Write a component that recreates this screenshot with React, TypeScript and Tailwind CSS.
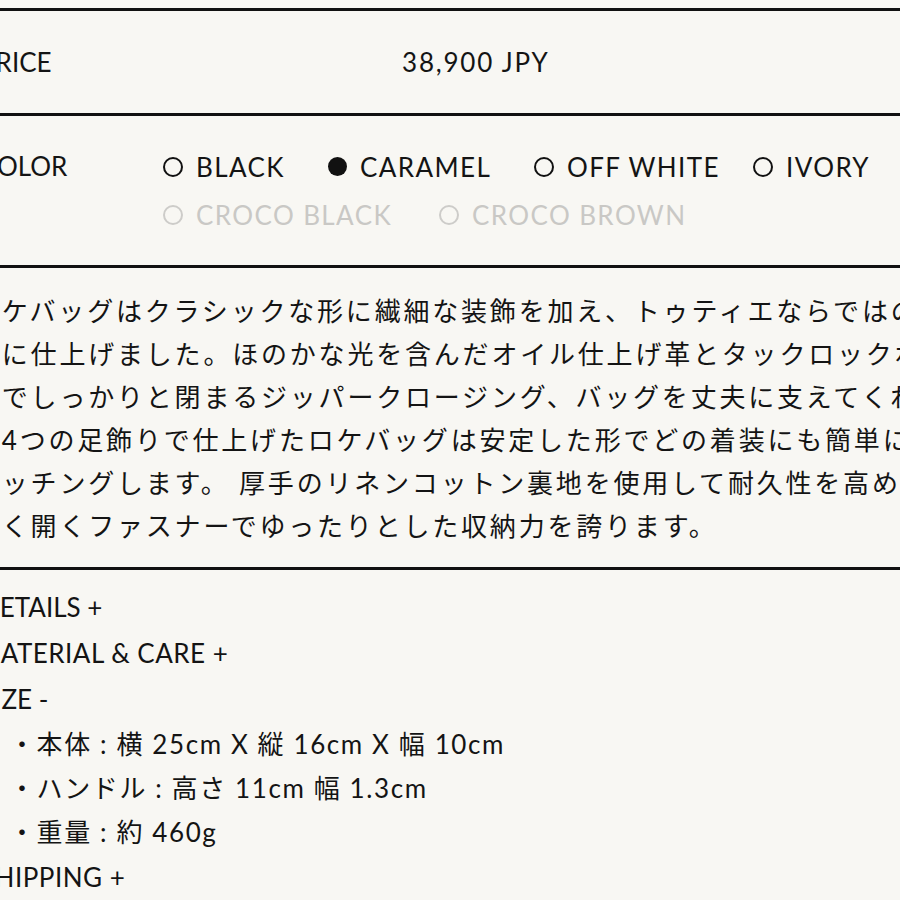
export default function App() {
  const lines = [
    "ロケバッグはクラシックな形に繊細な装飾を加え、トゥティエならではの上品な",
    "ンに仕上げました。ほのかな光を含んだオイル仕上げ革とタックロックボタン",
    "ンでしっかりと閉まるジッパークロージング、バッグを丈夫に支えてくれる",
    "る4つの足飾りで仕上げたロケバッグは安定した形でどの着装にも簡単にマ",
    "マッチングします。 厚手のリネンコットン裏地を使用して耐久性を高めた。",
    "きく開くファスナーでゆったりとした収納力を誇ります。",
  ];
  const row1 = [
    { name: "BLACK", on: false, w: "w-[165px]" },
    { name: "CARAMEL", on: true, w: "w-[206px]" },
    { name: "OFF WHITE", on: false, w: "w-[219px]" },
    { name: "IVORY", on: false, w: "w-[160px]" },
  ];
  const row2 = [
    { name: "CROCO BLACK", w: "w-[276px]" },
    { name: "CROCO BROWN", w: "w-[300px]" },
  ];
  return (
    <div className="w-[900px] h-[900px] overflow-hidden bg-[#f8f7f3] text-[#141414] font-[Lato,'Noto_Sans_CJK_JP',sans-serif] text-[26px]">
      <div className="w-[1000px] -ml-[20px] pt-[8px]">
        <div className="border-t-[3px] border-[#111] h-[105px] flex items-center">
          <div className="w-[422px]">PRICE</div>
          <div className="tracking-[1.8px]">38,900 JPY</div>
        </div>
        <div className="border-t-[3px] border-[#111] h-[152px] flex items-center">
          <div className="w-[183px] self-start pt-[26px] leading-[48px]">COLOR</div>
          <div className="flex flex-col leading-[48px] tracking-[1.4px]">
            <div className="flex">
              {row1.map((c) => (
                <div key={c.name} className={"flex items-center gap-[13px] " + c.w}>
                  <span
                    className={
                      c.on
                        ? "w-[19px] h-[19px] rounded-full bg-[#111] shrink-0"
                        : "w-[20px] h-[20px] rounded-full border-2 border-[#111] shrink-0"
                    }
                  />
                  <span className="whitespace-nowrap">{c.name}</span>
                </div>
              ))}
            </div>
            <div className="flex text-[#c9c8c5]">
              {row2.map((c) => (
                <div key={c.name} className={"flex items-center gap-[13px] " + c.w}>
                  <span className="w-[20px] h-[20px] rounded-full border-2 border-[#cdccc9] shrink-0" />
                  <span className="whitespace-nowrap">{c.name}</span>
                </div>
              ))}
            </div>
          </div>
        </div>
        <div className="border-t-[3px] border-[#111] h-[302px] pt-[22px]">
          <div className="-ml-[7px] leading-[43px] tracking-[2.8px]">
            {lines.map((l, i) => (
              <div key={i} className="whitespace-nowrap">
                {l}
              </div>
            ))}
          </div>
        </div>
        <div className="border-t-[3px] border-[#111] pt-[14px]">
          <div className="leading-[46px]">DETAILS +</div>
          <div className="leading-[46px] -ml-[4px] tracking-[0.5px]">MATERIAL &amp; CARE +</div>
          <div className="leading-[46px]">SIZE -</div>
          <ul className="leading-[44px] pl-[29px] tracking-[1.6px]">
            <li>・本体 : 横 25cm X 縦 16cm X 幅 10cm</li>
            <li>・ハンドル : 高さ 11cm 幅 1.3cm</li>
            <li>・重量 : 約 460g</li>
          </ul>
          <div className="leading-[46px] tracking-[0.5px]">SHIPPING +</div>
        </div>
      </div>
    </div>
  );
}
